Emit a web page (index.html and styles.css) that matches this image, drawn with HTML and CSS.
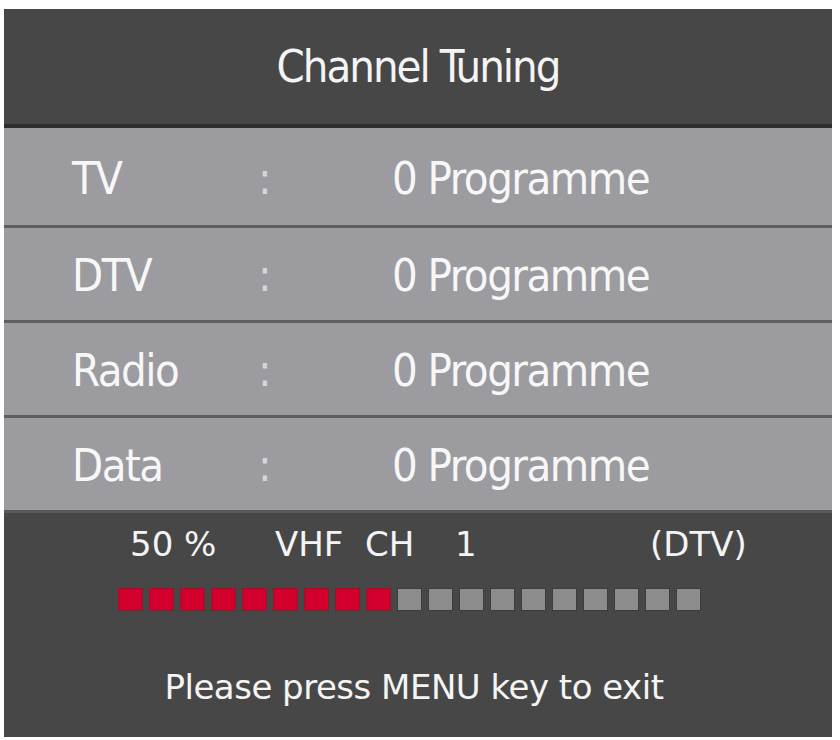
FILE: index.html
```html
<!DOCTYPE html>
<html lang="en">
<head>
<meta charset="utf-8">
<title>Channel Tuning</title>
<link rel="stylesheet" href="styles.css">
</head>
<body>
<div class="panel">
  <div class="header">Channel Tuning</div>
  <div class="rows">
    <div class="row first"><span class="label">TV</span><span class="colon">:</span><span class="value">0 Programme</span></div>
    <div class="row"><span class="label">DTV</span><span class="colon">:</span><span class="value">0 Programme</span></div>
    <div class="row"><span class="label">Radio</span><span class="colon">:</span><span class="value">0 Programme</span></div>
    <div class="row"><span class="label">Data</span><span class="colon">:</span><span class="value">0 Programme</span></div>
  </div>
  <div class="bottom">
    <div class="status">
      <span class="s-pct">50 %</span>
      <span class="s-band">VHF</span>
      <span class="s-ch">CH</span>
      <span class="s-num">1</span>
      <span class="s-type">(DTV)</span>
    </div>
    <div class="bar">
      <span class="blk on"></span><span class="blk on"></span><span class="blk on"></span><span class="blk on"></span><span class="blk on"></span><span class="blk on"></span><span class="blk on"></span><span class="blk on"></span><span class="blk on"></span>
      <span class="blk"></span><span class="blk"></span><span class="blk"></span><span class="blk"></span><span class="blk"></span><span class="blk"></span><span class="blk"></span><span class="blk"></span><span class="blk"></span><span class="blk"></span>
    </div>
    <div class="msg">Please press MENU key to exit</div>
  </div>
</div>
</body>
</html>
```

FILE: styles.css
```css
html, body {
  margin: 0;
  padding: 0;
  background: #ffffff;
}

body {
  width: 840px;
  height: 740px;
  overflow: hidden;
}

.panel {
  margin: 9px 8px 3px 4px;
  width: 828px;
  height: 728px;
  display: flex;
  flex-direction: column;
  background: #474747;
  color: #f6f6f6;
}

.header {
  height: 115px;
  border-bottom: 4px solid #2e2e2e;
  display: flex;
  align-items: center;
  justify-content: center;
  font-family: "DejaVu Sans Condensed", "DejaVu Sans", sans-serif;
  font-stretch: condensed;
  font-size: 45px;
  letter-spacing: -2px;
  color: #f4f4f4;
}

.rows {
  display: flex;
  flex-direction: column;
  background: #9b9ba0;
}

.row {
  height: 90px;
  border-top: 3px solid #5e5e62;
  display: grid;
  grid-template-columns: 186px 134px auto;
  align-items: center;
  padding-left: 68px;
  padding-top: 2px;
  font-family: "DejaVu Sans Condensed", "DejaVu Sans", sans-serif;
  font-stretch: condensed;
  font-size: 45px;
  letter-spacing: -1.5px;
  color: #f7f7f7;
}

.row.first {
  height: 93px;
  border-top: none;
  padding-top: 4px;
}

.colon {
  color: #d6d6da;
}

.bottom {
  flex: 1;
  border-top: 3px solid #5a5a5a;
  display: flex;
  flex-direction: column;
  font-family: "DejaVu Sans", sans-serif;
  color: #f4f4f4;
}

.status {
  margin-top: 11px;
  height: 40px;
  line-height: 40px;
  font-size: 34px;
  display: flex;
  padding-left: 126px;
  white-space: pre;
}

.s-pct { width: 145px; }
.s-band { width: 90px; }
.s-ch { width: 90px; }
.s-num { width: 195px; }

.bar {
  margin-top: 24px;
  padding-left: 114px;
  display: flex;
  gap: 6px;
  height: 23px;
}

.blk {
  width: 25px;
  height: 23px;
  box-sizing: border-box;
  background: #8c8c8c;
  border: 1px solid #3c3c3c;
}

.blk.on {
  background: #d3002d;
  border-color: #8a1a2a;
}

.msg {
  margin-top: 56px;
  height: 40px;
  line-height: 40px;
  font-size: 34px;
  letter-spacing: -0.5px;
  text-align: center;
  padding-right: 8px;
}
```
